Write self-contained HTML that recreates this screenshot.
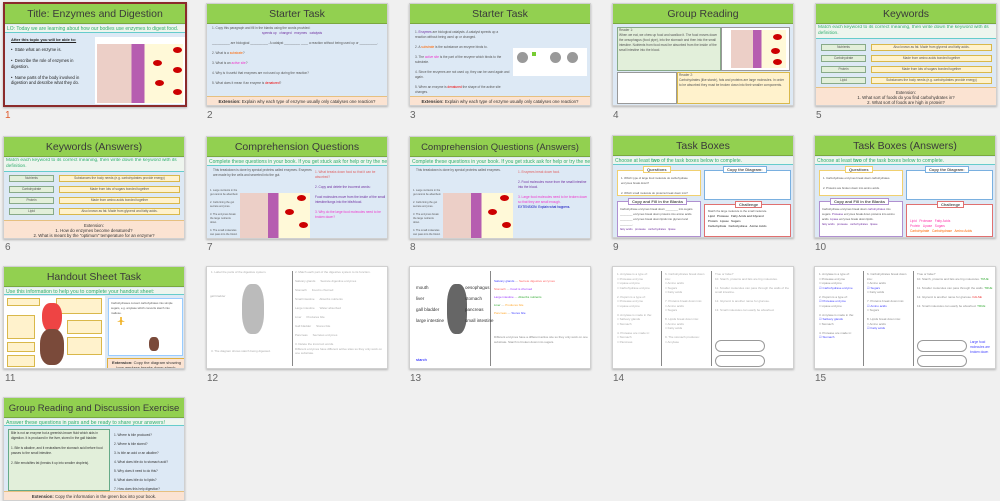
<!DOCTYPE html>
<html><head><meta charset="utf-8"><style>
*{margin:0;padding:0;box-sizing:border-box}
body{width:1000px;height:501px;background:#f0f0f0;position:relative;overflow:hidden;font-family:"Liberation Sans",sans-serif}
.s{position:absolute;width:182px;height:103px;background:#dde9f5;border:1px solid #d0d0d0;box-shadow:0 1px 2px rgba(0,0,0,.25);overflow:hidden}
.w{background:#fff}
.h{position:absolute;left:0;top:0;width:100%;height:20px;background:#92d050;color:#3a3a3a;font-size:10.5px;text-align:center;line-height:21px;border-bottom:1px solid #7aa83f;white-space:nowrap}
.b{position:absolute;left:0;top:21px;width:100%;height:8px;background:#eef5ee;color:#2fae6e;font-size:5px;line-height:8px;padding-left:2px;border-bottom:1px solid #6cc;white-space:nowrap;overflow:hidden}
.f{position:absolute;left:0;bottom:0;width:100%;height:9px;background:#fbe3d2;border-top:1px solid #e6c080;font-size:4.3px;text-align:center;line-height:9px;color:#333;white-space:nowrap;overflow:hidden}
.n{position:absolute;font-size:10px;color:#666}
.t{position:absolute;font-size:3.2px;color:#555;line-height:5px}
.gt{position:absolute;font-size:3px;color:#aaa;line-height:4.5px}
.box{position:absolute;border:1px solid #999}
.g{background:#e2efda;border-color:#8a8}
.y{background:#fff2cc;border-color:#d9b84a}
.img{position:absolute;background:linear-gradient(90deg,#eccfc7 0 40%,#b65db0 40% 55%,#fff9d8 55%);}
.rbc{position:absolute;width:9px;height:6px;border-radius:50%;background:#c00}
</style></head><body>

<!-- 1 -->
<div class="s" style="left:3px;top:2px;width:184px;height:105px;border:2px solid #8b2b2b">
<div class="h">Title: Enzymes and Digestion</div>
<div class="b">LO: Today we are learning about how our bodies use enzymes to digest food.</div>
<div class="t" style="left:6px;top:33px;font-size:4px;text-decoration:underline;font-weight:bold;color:#222">After this topic you will be able to:</div>
<div class="t" style="left:6px;top:43px;font-size:4.2px;color:#222;width:80px;line-height:5.5px">•&nbsp; State what an enzyme is.<br><br>•&nbsp; Describe the role of enzymes in digestion.<br><br>•&nbsp; Name parts of the body involved in digestion and describe what they do.</div>
<div style="position:absolute;left:90px;top:33px;width:90px;height:67px;background:#fff"></div>
<div class="img" style="left:92px;top:40px;width:86px;height:59px"></div>
<div class="rbc" style="left:168px;top:43px"></div><div class="rbc" style="left:148px;top:56px"></div><div class="rbc" style="left:168px;top:63px"></div><div class="rbc" style="left:150px;top:76px"></div><div class="rbc" style="left:168px;top:85px"></div>
</div>
<div class="n" style="left:5px;top:110px;color:#e05a2a">1</div>

<!-- 2 -->
<div class="s" style="left:206px;top:3px">
<div class="h">Starter Task</div>
<div class="t" style="left:5px;top:22px;width:172px">1. Copy this paragraph and fill in the blanks using the words provided:<br><span style="color:#7030a0;padding-left:50px">speeds up &nbsp; changed &nbsp; enzymes &nbsp; catalysts</span><br><br>__________ are biological __________. A catalyst _________ ____ a reaction without being used up or __________.<br><br>2. What is a <span style="color:#f60">substrate</span>?<br><br>3. What is an <span style="color:#e3c">active site</span>?<br><br>4. Why is it useful that enzymes are not used up during the reaction?<br><br>5. What does it mean if an enzyme is <span style="color:#e00">denatured</span>?</div>
<div class="f"><b>Extension:</b> Explain why each type of enzyme usually only catalyses one reaction?</div>
</div>
<div class="n" style="left:207px;top:110px">2</div>

<!-- 3 -->
<div class="s" style="left:409px;top:3px">
<div class="h">Starter Task</div>
<div class="t" style="left:5px;top:26px;width:95px">1. <span style="color:#7030a0">Enzymes</span> are biological catalysts. A catalyst speeds up a reaction without being used up or changed.<br><br>2. A <span style="color:#f60">substrate</span> is the substance an enzyme binds to.<br><br>3. The <span style="color:#e3c">active site</span> is the part of the enzyme which binds to the substrate.<br><br>4. Since the enzymes are not used up, they can be used again and again.<br><br>5. When an enzyme is <span style="color:#e00">denatured</span> the shape of the active site changes.</div>
<div style="position:absolute;left:103px;top:44px;width:74px;height:28px;background:#fff"></div>
<div style="position:absolute;left:107px;top:48px;width:11px;height:11px;border-radius:50%;background:#999"></div>
<div style="position:absolute;left:140px;top:48px;width:11px;height:11px;border-radius:50%;background:#999"></div>
<div style="position:absolute;left:157px;top:48px;width:11px;height:11px;border-radius:50%;background:#999"></div>
<div style="position:absolute;left:122px;top:48px;width:4px;height:4px;background:#7c3"></div>
<div class="f"><b>Extension:</b> Explain why each type of enzyme usually only catalyses one reaction?</div>
</div>
<div class="n" style="left:410px;top:110px">3</div>

<!-- 4 -->
<div class="s" style="left:612px;top:3px">
<div class="h">Group Reading</div>
<div class="box g" style="left:4px;top:23px;width:104px;height:44px"></div>
<div class="t" style="left:6px;top:24px;width:100px">Reader 1:<br>When we eat, we chew up food and swallow it. The food moves down the oesophagus (food pipe), into the stomach and then into the small intestine. Nutrients from food must be absorbed from the inside of the small intestine into the blood.</div>
<div class="box" style="left:108px;top:23px;width:69px;height:44px;background:#fff"></div>
<div class="img" style="left:118px;top:26px;width:55px;height:38px"></div>
<div class="rbc" style="left:160px;top:30px"></div><div class="rbc" style="left:158px;top:44px"></div><div class="rbc" style="left:160px;top:55px"></div>
<div class="box" style="left:4px;top:68px;width:60px;height:32px;background:#fff"></div>
<div class="box y" style="left:64px;top:68px;width:113px;height:32px"></div>
<div class="t" style="left:66px;top:69px;width:108px">Reader 2:<br>Carbohydrates (like starch), fats and proteins are large molecules. In order to be absorbed they must be broken down into their smaller components.</div>
</div>
<div class="n" style="left:613px;top:110px">4</div>

<!-- 5 -->
<div class="s" style="left:815px;top:3px">
<div class="h">Keywords</div>
<div class="b" style="height:14px;white-space:normal;line-height:6px;font-size:4.8px">Match each keyword to its correct meaning, then write down the keyword with its definition.</div>
<div class="box g" style="left:5px;top:40px;width:45px;height:7px"></div><div class="box y" style="left:55px;top:40px;width:121px;height:7px"></div>
<div class="box g" style="left:5px;top:51px;width:45px;height:7px"></div><div class="box y" style="left:55px;top:51px;width:121px;height:7px"></div>
<div class="box g" style="left:5px;top:62px;width:45px;height:7px"></div><div class="box y" style="left:55px;top:62px;width:121px;height:7px"></div>
<div class="box g" style="left:5px;top:73px;width:45px;height:7px"></div><div class="box y" style="left:55px;top:73px;width:121px;height:7px"></div>
<div class="t" style="left:5px;top:41px;width:45px;text-align:center;line-height:5.5px">Nutrients<br><br>Carbohydrate<br><br>Protein<br><br>Lipid</div>
<div class="t" style="left:55px;top:41px;width:121px;text-align:center;line-height:5.5px">Also known as fat. Made from glycerol and fatty acids.<br><br>Made from amino acids bonded together<br><br>Made from lots of sugars bonded together<br><br>Substances the body needs (e.g. carbohydrates provide energy)</div>
<div class="f" style="height:18px;line-height:5px;padding-top:2px">Extension:<br>1. What sort of foods do you find carbohydrates in?<br>2. What sort of foods are high in protein?</div>
</div>
<div class="n" style="left:816px;top:110px">5</div>

<!-- 6 -->
<div class="s" style="left:3px;top:136px">
<div class="h">Keywords (Answers)</div>
<div class="b" style="height:14px;white-space:normal;line-height:6px;font-size:4.8px">Match each keyword to its correct meaning, then write down the keyword with its definition.</div>
<div class="box g" style="left:5px;top:38px;width:45px;height:7px"></div><div class="box y" style="left:55px;top:38px;width:121px;height:7px"></div>
<div class="box g" style="left:5px;top:49px;width:45px;height:7px"></div><div class="box y" style="left:55px;top:49px;width:121px;height:7px"></div>
<div class="box g" style="left:5px;top:60px;width:45px;height:7px"></div><div class="box y" style="left:55px;top:60px;width:121px;height:7px"></div>
<div class="box g" style="left:5px;top:71px;width:45px;height:7px"></div><div class="box y" style="left:55px;top:71px;width:121px;height:7px"></div>
<div class="t" style="left:5px;top:39px;width:45px;text-align:center;line-height:5.5px">Nutrients<br><br>Carbohydrate<br><br>Protein<br><br>Lipid</div>
<div class="t" style="left:55px;top:39px;width:121px;text-align:center;line-height:5.5px">Substances the body needs (e.g. carbohydrates provide energy)<br><br>Made from lots of sugars bonded together<br><br>Made from amino acids bonded together<br><br>Also known as fat. Made from glycerol and fatty acids.</div>
<div class="f" style="height:18px;line-height:5px;padding-top:2px">Extension:<br>1. How do enzymes become denatured?<br>2. What is meant by the "optimum" temperature for an enzyme?</div>
</div>
<div class="n" style="left:5px;top:242px">6</div>

<!-- 7 -->
<div class="s" style="left:206px;top:136px">
<div class="h">Comprehension Questions</div>
<div class="b">Complete these questions in your book. If you get stuck ask for help or try the next one!</div>
<div class="t" style="left:6px;top:31px;width:100px">This breakdown is done by special proteins called enzymes. Enzymes are made by the cells and secreted into the gut.</div>
<div class="t" style="left:3px;top:52px;width:28px;font-size:2.6px;line-height:4px">1. Large nutrients in the gut cannot be absorbed.<br><br>2. Cells lining the gut secrete enzymes.<br><br>3. The enzymes break the large nutrients down.<br><br>4. The small molecules can pass into the blood.</div>
<div class="img" style="left:33px;top:56px;width:70px;height:45px"></div>
<div class="rbc" style="left:90px;top:58px"></div><div class="rbc" style="left:78px;top:72px"></div><div class="rbc" style="left:92px;top:85px"></div>
<div class="t" style="left:108px;top:33px;width:72px;color:#e06060">1. What breaks down food so that it can be absorbed?<br><br><span style="color:#7030a0">2. Copy and delete the incorrect words:<br><br>Food molecules move from the inside of the small intestine/lungs into the bile/blood.</span><br><br><span style="color:#e3c">3. Why do the large food molecules need to be broken down?</span></div>
</div>
<div class="n" style="left:207px;top:242px">7</div>

<!-- 8 -->
<div class="s" style="left:409px;top:136px">
<div class="h" style="font-size:9.5px">Comprehension Questions (Answers)</div>
<div class="b">Complete these questions in your book. If you get stuck ask for help or try the next one!</div>
<div class="t" style="left:6px;top:31px;width:100px">This breakdown is done by special proteins called enzymes.</div>
<div class="t" style="left:3px;top:52px;width:28px;font-size:2.6px;line-height:4px">1. Large nutrients in the gut cannot be absorbed.<br><br>2. Cells lining the gut secrete enzymes.<br><br>3. The enzymes break the large nutrients down.<br><br>4. The small molecules can pass into the blood.</div>
<div class="img" style="left:33px;top:56px;width:70px;height:45px"></div>
<div class="rbc" style="left:90px;top:58px"></div><div class="rbc" style="left:78px;top:72px"></div><div class="rbc" style="left:92px;top:85px"></div>
<div class="t" style="left:108px;top:33px;width:72px;color:#e06060">1. Enzymes break down food.<br><br><span style="color:#7030a0">2. Food molecules move from the small intestine into the blood.</span><br><br><span style="color:#e3c">3. Large food molecules need to be broken down so that they are small enough.</span><br><span style="color:#00b">EXTENSION: Explain what happens.</span></div>
</div>
<div class="n" style="left:410px;top:242px">8</div>

<!-- 9 & 10 -->
<div class="s" style="left:612px;top:135px">
<div class="h">Task Boxes</div>
<div class="b">Choose at least <b>two</b> of the task boxes below to complete.</div>
<div class="box" style="left:4px;top:34px;width:84px;height:26px;background:#fff;border-color:#f0d070"></div>
<div class="box" style="left:91px;top:34px;width:87px;height:30px;background:#fff;border-color:#7ab0e0"></div>
<div class="box" style="left:4px;top:65px;width:84px;height:36px;background:#fff;border-color:#b090d0"></div>
<div class="box" style="left:91px;top:68px;width:87px;height:33px;background:#fff;border-color:#e07070"></div>
<div class="t" style="left:30px;top:30px;background:#fff;border:1px solid #f0d070;font-size:4px;padding:0 3px;font-weight:bold">Questions</div>
<div class="t" style="left:110px;top:30px;background:#fff;border:1px solid #7ab0e0;font-size:4px;padding:0 3px;font-weight:bold">Copy the Diagram:</div>
<div class="t" style="left:15px;top:62px;background:#fff;border:1px solid #b090d0;font-size:4px;padding:0 3px;font-weight:bold">Copy and Fill in the Blanks</div>
<div class="t" style="left:122px;top:65px;background:#fff;border:1px solid #e07070;font-size:4px;padding:0 3px;font-weight:bold">Challenge</div>
<div class="t" style="left:8px;top:40px;width:76px;font-size:2.8px">1. Which type of large food molecule do carbohydrase enzymes break down?<br><br>2. Which small molecule do proteins break down into?</div>
<div class="t" style="left:7px;top:71px;width:78px;font-size:2.8px">Carbohydrase enzymes break down ________ into sugars. ________ enzymes break down proteins into amino acids. ________ enzymes break down lipids into glycerol and ________.<br><span style="color:#7030a0">fatty acids &nbsp; protease &nbsp; carbohydrates &nbsp; lipase</span></div>
<div class="t" style="left:95px;top:73px;width:80px;font-size:2.8px">Match the large molecule to the small molecule.<br><b>Lipid &nbsp; Protease &nbsp; Fatty Acids and Glycerol<br>Protein &nbsp; Lipase &nbsp; Sugars<br>Carbohydrate &nbsp; Carbohydrase &nbsp; Amino Acids</b></div>
</div>
<div class="n" style="left:613px;top:242px">9</div>
<div class="s" style="left:814px;top:135px">
<div class="h">Task Boxes (Answers)</div>
<div class="b">Choose at least <b>two</b> of the task boxes below to complete.</div>
<div class="box" style="left:4px;top:34px;width:84px;height:26px;background:#fff;border-color:#f0d070"></div>
<div class="box" style="left:91px;top:34px;width:87px;height:30px;background:#fff;border-color:#7ab0e0"></div>
<div class="box" style="left:4px;top:65px;width:84px;height:36px;background:#fff;border-color:#b090d0"></div>
<div class="box" style="left:91px;top:68px;width:87px;height:33px;background:#fff;border-color:#e07070"></div>
<div class="t" style="left:30px;top:30px;background:#fff;border:1px solid #f0d070;font-size:4px;padding:0 3px;font-weight:bold">Questions</div>
<div class="t" style="left:110px;top:30px;background:#fff;border:1px solid #7ab0e0;font-size:4px;padding:0 3px;font-weight:bold">Copy the Diagram:</div>
<div class="t" style="left:15px;top:62px;background:#fff;border:1px solid #b090d0;font-size:4px;padding:0 3px;font-weight:bold">Copy and Fill in the Blanks</div>
<div class="t" style="left:122px;top:65px;background:#fff;border:1px solid #e07070;font-size:4px;padding:0 3px;font-weight:bold">Challenge</div>
<div class="t" style="left:8px;top:40px;width:76px;font-size:2.8px">1. Carbohydrase enzymes break down carbohydrates.<br><br>2. Proteins are broken down into amino acids.</div>
<div class="t" style="left:7px;top:71px;width:78px;font-size:2.8px">Carbohydrase enzymes break down <span style="color:#7030a0">carbohydrates</span> into sugars. <span style="color:#7030a0">Protease</span> enzymes break down proteins into amino acids. <span style="color:#7030a0">Lipase</span> enzymes break down lipids.<br><span style="color:#7030a0">fatty acids &nbsp; protease &nbsp; carbohydrates &nbsp; lipase</span></div>
<div class="t" style="left:95px;top:83px;color:#f3a;width:80px">Lipid &nbsp; Protease &nbsp; Fatty Acids<br>Protein &nbsp; Lipase &nbsp; Sugars<br><span style="color:#f60">Carbohydrate &nbsp; Carbohydrase &nbsp; Amino Acids</span></div>
</div>
<div class="n" style="left:815px;top:242px">10</div>

<!-- 11 -->
<div class="s" style="left:3px;top:266px">
<div class="h">Handout Sheet Task</div>
<div class="b" style="height:7px;font-size:5.2px">Use this information to help you to complete your handout sheet:</div>
<div style="position:absolute;left:0;top:29px;width:101px;height:74px;background:#fff"></div>
<div class="box y" style="left:3px;top:31px;width:33px;height:8px"></div>
<div class="box y" style="left:3px;top:48px;width:28px;height:24px"></div>
<div class="box y" style="left:3px;top:75px;width:28px;height:10px"></div>
<div class="box y" style="left:3px;top:88px;width:28px;height:12px"></div>
<div class="box y" style="left:52px;top:31px;width:46px;height:16px"></div>
<div class="box y" style="left:63px;top:53px;width:35px;height:14px"></div>
<div class="box y" style="left:63px;top:70px;width:35px;height:18px"></div>
<div style="position:absolute;left:38px;top:36px;width:20px;height:30px;background:#e44;border-radius:40% 40% 50% 50%"></div>
<div style="position:absolute;left:36px;top:62px;width:24px;height:36px;background:#7a4a3a;border-radius:40%"></div>
<div style="position:absolute;left:104px;top:31px;width:75px;height:58px;background:#fff;border:1px solid #9cf"></div>
<div class="t" style="left:107px;top:34px;width:68px;font-size:2.8px">Carbohydrases convert carbohydrates into simple sugars, e.g. amylase which converts starch into maltose.</div>
<div style="position:absolute;left:113px;top:50px;width:8px;height:8px;background:#f0b020;clip-path:polygon(40% 0,60% 0,60% 40%,100% 60%,60% 60%,60% 100%,40% 100%,40% 60%,0 60%,40% 40%)"></div>
<div style="position:absolute;left:145px;top:70px;width:10px;height:14px;background:#7a4a3a;border-radius:40%"></div>
<div style="position:absolute;left:103px;top:91px;width:79px;height:12px;background:#fbe3d2;border:1px solid #e0b040;font-size:4px;text-align:center;line-height:5px;padding-top:1px;color:#333"><b>Extension:</b> Copy the diagram showing how amylase breaks down starch.</div>
</div>
<div class="n" style="left:5px;top:373px">11</div>

<!-- 12-15 -->
<div class="s w" style="left:206px;top:266px">
<div style="position:absolute;left:85px;top:4px;width:1px;height:95px;background:#888"></div>
<div style="position:absolute;left:35px;top:17px;width:22px;height:50px;background:#bbb;border-radius:40%"></div>
<div class="gt" style="left:4px;top:3px">1. Label the parts of the digestive system.</div>
<div class="gt" style="left:3px;top:27px">gall bladder</div>
<div class="gt" style="left:88px;top:3px;width:90px">2. Match each part of the digestive system to its function.<br><br>Salivary glands &nbsp;&nbsp;&nbsp;&nbsp; Secrete digestive enzymes<br><br>Stomach &nbsp;&nbsp;&nbsp;&nbsp; Food is churned<br><br>Small intestine &nbsp;&nbsp;&nbsp;&nbsp; Absorbs nutrients<br><br>Large intestine &nbsp;&nbsp;&nbsp;&nbsp; Water absorbed<br><br>Liver &nbsp;&nbsp;&nbsp;&nbsp; Produces bile<br><br>Gall bladder &nbsp;&nbsp;&nbsp;&nbsp; Stores bile<br><br>Pancreas &nbsp;&nbsp;&nbsp;&nbsp; Secretes enzymes<br><br>3. Delete the incorrect words.<br>Different enzymes have different active sites so they only work on one substrate.</div>
<div class="gt" style="left:4px;top:82px">3. The diagram shows starch being digested.</div>
</div>
<div class="n" style="left:207px;top:373px">12</div>
<div class="s w" style="left:409px;top:266px">
<div style="position:absolute;left:80px;top:4px;width:1px;height:95px;background:#888"></div>
<div style="position:absolute;left:37px;top:17px;width:20px;height:50px;background:#666;border-radius:40%"></div>
<div class="t" style="left:6px;top:15px;font-size:4.5px;line-height:11px;color:#333">mouth<br>liver<br>gall bladder<br>large intestine</div>
<div class="t" style="left:55px;top:15px;font-size:4.5px;line-height:11px;color:#333">oesophagus<br>stomach<br>pancreas<br>small intestine</div>
<div class="t" style="left:6px;top:90px;color:#00f;font-size:4px">starch</div>
<div class="gt" style="left:84px;top:10px;width:95px;line-height:8px"><span style="color:#44f">Salivary glands</span> — <span style="color:#f66">Secrete digestive enzymes</span><br><span style="color:#f66">Stomach</span> — <span style="color:#93f">Food is churned</span><br><span style="color:#93f">Large intestine</span> — <span style="color:#3a3">Absorbs nutrients</span><br><span style="color:#3a3">Liver</span> — <span style="color:#fa3">Produces bile</span><br><span style="color:#fa3">Pancreas</span> — <span style="color:#44f">Stores bile</span></div>
<div class="gt" style="left:84px;top:68px;width:95px;color:#888">Different enzymes have a different active site so they only work on one substrate. Starch is broken down into sugars.</div>
</div>
<div class="n" style="left:410px;top:373px">13</div>
<div class="s w" style="left:612px;top:266px">
<div style="position:absolute;left:48px;top:4px;width:1px;height:95px;background:#888"></div>
<div style="position:absolute;left:98px;top:4px;width:1px;height:95px;background:#888"></div>
<div class="gt" style="left:4px;top:5px;width:42px">1. Amylase is a type of:<br>□ Protease enzyme<br>□ Lipase enzyme<br>□ Carbohydrase enzyme<br><br>2. Pepsin is a type of:<br>□ Protease enzyme<br>□ Lipase enzyme<br><br>3. Amylase is made in the:<br>□ Salivary glands<br>□ Stomach<br><br>4. Protease are made in:<br>□ Stomach<br>□ Pancreas</div>
<div class="gt" style="left:52px;top:5px;width:44px">6. Carbohydrates break down into:<br>□ Amino acids<br>□ Sugars<br>□ Fatty acids<br><br>7. Proteins break down into:<br>□ Amino acids<br>□ Sugars<br><br>8. Lipids break down into:<br>□ Amino acids<br>□ Fatty acids<br><br>9. The stomach produces:<br>□ Amylase</div>
<div class="gt" style="left:102px;top:5px;width:78px">True or false?<br>10. Starch, proteins and fats are big molecules.<br><br>11. Smaller molecules can pass through the walls of the small intestine.<br><br>12. Glycerol is another name for glucose.<br><br>13. Small molecules can easily be absorbed.</div>
<div style="position:absolute;left:102px;top:73px;width:50px;height:12px;border:1px solid #999;border-radius:6px"></div>
<div style="position:absolute;left:102px;top:88px;width:50px;height:12px;border:1px solid #999;border-radius:6px"></div>
</div>
<div class="n" style="left:613px;top:373px">14</div>
<div class="s w" style="left:814px;top:266px">
<div style="position:absolute;left:48px;top:4px;width:1px;height:95px;background:#888"></div>
<div style="position:absolute;left:98px;top:4px;width:1px;height:95px;background:#888"></div>
<div class="gt" style="left:4px;top:5px;width:42px;color:#888">1. Amylase is a type of:<br>□ Protease enzyme<br>□ Lipase enzyme<br><span style="color:#44f">☑ Carbohydrase enzyme</span><br><br>2. Pepsin is a type of:<br><span style="color:#44f">☑ Protease enzyme</span><br>□ Lipase enzyme<br><br>3. Amylase is made in the:<br><span style="color:#44f">☑ Salivary glands</span><br>□ Stomach<br><br>4. Protease are made in:<br><span style="color:#44f">☑ Stomach</span></div>
<div class="gt" style="left:52px;top:5px;width:44px;color:#888">6. Carbohydrates break down into:<br>□ Amino acids<br><span style="color:#44f">☑ Sugars</span><br>□ Fatty acids<br><br>7. Proteins break down into:<br><span style="color:#44f">☑ Amino acids</span><br>□ Sugars<br><br>8. Lipids break down into:<br>□ Amino acids<br><span style="color:#44f">☑ Fatty acids</span></div>
<div class="gt" style="left:102px;top:5px;width:78px;color:#888">True or false?<br>10. Starch, proteins and fats are big molecules. <span style="color:#3a3">TRUE</span><br><br>11. Smaller molecules can pass through the walls. <span style="color:#3a3">TRUE</span><br><br>12. Glycerol is another name for glucose. <span style="color:#e33">FALSE</span><br><br>13. Small molecules can easily be absorbed. <span style="color:#3a3">TRUE</span></div>
<div style="position:absolute;left:102px;top:73px;width:50px;height:12px;border:1px solid #999;border-radius:6px"></div>
<div style="position:absolute;left:102px;top:88px;width:50px;height:12px;border:1px solid #999;border-radius:6px"></div>
<div class="t" style="left:155px;top:73px;color:#44f;width:26px">Large food molecules are broken down</div>
</div>
<div class="n" style="left:815px;top:373px">15</div>

<!-- 16 -->
<div class="s" style="left:3px;top:397px;height:104px">
<div class="h" style="font-size:9.5px">Group Reading and Discussion Exercise</div>
<div class="b" style="height:7px;font-size:5.2px">Answer these questions in pairs and be ready to share your answers!</div>
<div class="box g" style="left:4px;top:31px;width:102px;height:62px;border-color:#6a8"></div>
<div class="t" style="left:7px;top:33px;width:96px;color:#333">Bile is not an enzyme but a greenish-brown fluid which aids in digestion. It is produced in the liver, stored in the gall bladder.<br><br>1. Bile is alkaline, and it neutralises the stomach acid before food passes to the small intestine.<br><br>2. Bile emulsifies fat (breaks it up into smaller droplets).</div>
<div class="t" style="left:110px;top:33px;width:70px;line-height:9px;color:#333">1. Where is bile produced?<br>2. Where is bile stored?<br>3. Is bile an acid or an alkaline?<br>4. What does bile do to stomach acid?<br>5. Why does it need to do this?<br>6. What does bile do to lipids?<br>7. How does this help digestion?</div>
<div class="f"><b>Extension:</b> Copy the information in the green box into your book.</div>
</div>
</body></html>
